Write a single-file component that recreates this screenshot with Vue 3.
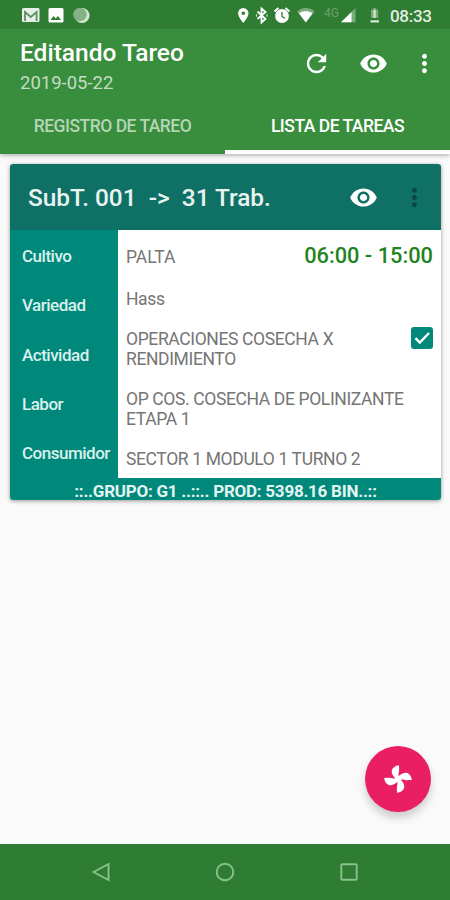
<template>
  <div class="screen">
    <header class="top">
      <div class="status-bar">
        <svg class="status-icons" viewBox="0 0 450 29">
          <!-- notifications -->
          <rect x="22" y="8" width="17.500" height="14" rx="1.500" fill="#e6f0e6" />
          <path d="M25 21v-9l5.800 5 5.800-5v9" fill="none" stroke="#5f8f62" stroke-width="1.800" />
          <rect x="48.500" y="8" width="15" height="14.500" rx="1.500" fill="#fff" />
          <path d="M50.500 20l3-4 2.300 2.500 2-2.500 3.200 4z" fill="#2e7d32" />
          <circle cx="82" cy="15.500" r="7.600" fill="#d5e8d5" />
          <circle cx="80" cy="14.500" r="6.800" fill="#84b287" />
          <!-- system -->
          <path d="M243.300 8a5.200 5.200 0 0 0-5.200 5.200c0 3.900 5.200 9.800 5.200 9.800s5.200-5.900 5.200-9.800A5.200 5.200 0 0 0 243.300 8zm0 7a1.800 1.800 0 1 1 0-3.600 1.800 1.800 0 0 1 0 3.600z" fill="#fff" />
          <path d="M257.500 11.500l8 7.500-4 3.500V8.500l4 3.500-8 7" fill="none" stroke="#fff" stroke-width="1.800" />
          <path d="M256.500 14.200v2.600M267 14.200v2.600" stroke="#c9dfca" stroke-width="1.200" />
          <circle cx="282" cy="16" r="6.900" fill="#fff" />
          <path d="M274.500 11.500l4-3.500M289.500 11.500l-4-3.500" stroke="#fff" stroke-width="2" />
          <path d="M282 12v4.500l3 2" fill="none" stroke="#2e7d32" stroke-width="1.300" />
          <path d="M297 11.500c5-4.600 12.600-4.600 17.600 0L305.800 22.500z" fill="#79ab7b" />
          <path d="M299 13.200c4.200-2.600 9.400-2.600 13.600 0l-6.800 9.300z" fill="#fff" />
          <path d="M341 22.300h14.500V8z" fill="#79ab7b" />
          <path d="M341 22.300h10.500V12z" fill="#fff" />
          <path d="M371 9.500h2V8h3.200v1.500h2v8.500h-7.200z" fill="#79ab7b" />
          <path d="M374.600 10v8M370.500 21.300h8.500" stroke="#d5e8d5" stroke-width="2.200" />
        </svg>
        <span class="network">4G</span>
        <span class="clock">08:33</span>
      </div>

      <div class="toolbar">
        <div class="titles">
          <h1>Editando Tareo</h1>
          <p>2019-05-22</p>
        </div>
        <button type="button" class="icon-btn refresh">
          <svg viewBox="0 0 24 24"><path :d="icons.refresh" /></svg>
        </button>
        <button type="button" class="icon-btn eye">
          <svg viewBox="0 0 24 24"><path :d="icons.eye" /></svg>
        </button>
        <button type="button" class="icon-btn more">
          <svg viewBox="0 0 24 24"><path :d="icons.more" /></svg>
        </button>
      </div>

      <nav class="tabs">
        <button
          v-for="(tab, index) in tabs"
          :key="tab"
          type="button"
          :class="['tab', { active: activeTab === index }]"
          @click="activeTab = index"
        >
          <span>{{ tab }}</span>
        </button>
      </nav>
    </header>

    <main class="content">
      <section class="card">
        <div class="card-header">
          <h2>SubT. 001 &nbsp;-&gt; &nbsp;31 Trab.</h2>
          <button type="button" class="icon-btn eye">
            <svg viewBox="0 0 24 24"><path :d="icons.eye" /></svg>
          </button>
          <button type="button" class="icon-btn card-more">
            <svg viewBox="0 0 24 24"><path :d="icons.more" /></svg>
          </button>
        </div>

        <div class="card-body">
          <div class="labels">
            <span v-for="label in labels" :key="label">{{ label }}</span>
          </div>
          <div class="values">
            <div class="row first">
              <span>PALTA</span>
              <strong class="hours">06:00 - 15:00</strong>
            </div>
            <div class="row">Hass</div>
            <div class="row">
              <span>OPERACIONES COSECHA X<br />RENDIMIENTO</span>
              <button type="button" :class="['checkbox', { checked }]" @click="checked = !checked">
                <svg v-if="checked" viewBox="0 0 22 22"><path d="M4.500 11.200l4.300 4.300L18 6" /></svg>
              </button>
            </div>
            <div class="row">OP COS. COSECHA DE POLINIZANTE<br />ETAPA 1</div>
            <div class="row">SECTOR 1 MODULO 1 TURNO 2</div>
          </div>
        </div>

        <div class="card-footer"><span>::..GRUPO: G1 ..::.. PROD: 5398.16 BIN..::</span></div>
      </section>

      <button type="button" class="fab">
        <svg viewBox="-15 -15 30 30">
          <path
            v-for="angle in [0, 90, 180, 270]"
            :key="angle"
            :transform="`rotate(${angle})`"
            d="M-1.500 1C-4-2-6.800-5-6.200-8.500C-5.500-11.500-2.500-13.500 1-13.800C.9-11.500 1.500-9.500 .9-7C.3-4.500 .4-2.500 1.500 0z"
          />
        </svg>
      </button>
    </main>

    <footer class="nav-bar">
      <svg viewBox="0 0 24 24"><path d="M4.500 12L19.500 4v16z" /></svg>
      <svg viewBox="0 0 24 24"><circle cx="12" cy="12" r="8.300" /></svg>
      <svg viewBox="0 0 24 24"><rect x="4.300" y="4.300" width="15.400" height="15.400" rx="1" /></svg>
    </footer>
  </div>
</template>

<script setup>
import { ref } from 'vue'

const tabs = ['REGISTRO DE TAREO', 'LISTA DE TAREAS']
const activeTab = ref(1)
const checked = ref(true)

const labels = ['Cultivo', 'Variedad', 'Actividad', 'Labor', 'Consumidor']

const icons = {
  refresh: 'M17.650 6.350C16.200 4.900 14.210 4 12 4c-4.420 0-7.990 3.580-7.990 8s3.570 8 7.990 8c3.730 0 6.840-2.550 7.730-6h-2.080c-.820 2.330-3.040 4-5.650 4-3.310 0-6-2.690-6-6s2.690-6 6-6c1.660 0 3.140.690 4.220 1.780L13 11h7V4l-2.350 2.350z',
  eye: 'M12 4.500C7 4.500 2.730 7.610 1 12c1.730 4.390 6 7.500 11 7.500s9.270-3.110 11-7.500c-1.730-4.390-6-7.500-11-7.500zM12 17c-2.760 0-5-2.240-5-5s2.240-5 5-5 5 2.240 5 5-2.240 5-5 5zm0-8c-1.660 0-3 1.340-3 3s1.340 3 3 3 3-1.340 3-3-1.340-3-3-3z',
  more: 'M12 8c1.100 0 2-.900 2-2s-.900-2-2-2-2 .900-2 2 .900 2 2 2zm0 2c-1.100 0-2 .900-2 2s.900 2 2 2 2-.900 2-2-.900-2-2-2zm0 6c-1.100 0-2 .900-2 2s.900 2 2 2 2-.900 2-2-.900-2-2-2z'
}
</script>

<style>
body {
  margin: 0;
}
</style>

<style scoped>
.screen {
  width: 450px;
  height: 900px;
  display: flex;
  flex-direction: column;
  overflow: hidden;
  background: #fafafa;
  font-family: Roboto, sans-serif;
  white-space: nowrap;
}

button {
  padding: 0;
  border: none;
  background: none;
  font: inherit;
  cursor: pointer;
}

h1,
h2,
p {
  margin: 0;
}

.top {
  height: 154px;
  flex: none;
  display: flex;
  flex-direction: column;
  background: #388e3c;
  box-shadow: 0 1px 5px rgba(0, 0, 0, 0.35);
}

.status-bar {
  position: relative;
  height: 29px;
  flex: none;
  display: flex;
  justify-content: flex-end;
  align-items: center;
  background: #2e7d32;
  box-sizing: border-box;
  padding: 3px 18px 0 0;
}

.status-icons {
  position: absolute;
  inset: 0;
  width: 450px;
  height: 29px;
}

.network {
  margin: -7px 51px 0 0;
  font-size: 12px;
  color: #6a9f6d;
}

.clock {
  width: 42px;
  font-size: 17px;
  font-weight: 500;
  letter-spacing: -0.3px;
  color: #e3eee3;
}

.toolbar {
  height: 68px;
  flex: none;
  display: flex;
  align-items: center;
  padding-left: 20px;
}

.titles {
  flex: 1;
  padding-top: 8px;
}

.titles h1 {
  font-size: 24.5px;
  line-height: 28px;
  font-weight: 500;
  color: #fff;
}

.titles p {
  margin-top: 3px;
  font-size: 18.5px;
  line-height: 26px;
  color: #c3ddc4;
}

.icon-btn {
  display: flex;
  align-items: center;
  justify-content: center;
}

.icon-btn svg {
  width: 29px;
  height: 29px;
  fill: #fff;
}

.toolbar .refresh {
  width: 59px;
}

.toolbar .eye {
  width: 55px;
}

.toolbar .more {
  width: 49px;
  padding-right: 3px;
}

.tabs {
  flex: 1;
  display: flex;
}

.tab {
  flex: 1;
  display: flex;
  align-items: center;
  justify-content: center;
  padding-top: 4px;
  border-bottom: 4px solid transparent;
  font-size: 17.5px;
  font-weight: 500;
  letter-spacing: -0.5px;
  color: #b5d5b7;
}

.tab.active {
  border-bottom-color: #fff;
  color: #fff;
}

.content {
  position: relative;
  flex: 1;
  padding: 10px 9px 0 10px;
}

.card {
  border-radius: 3px;
  overflow: hidden;
  background: #fff;
  box-shadow: 0 1px 4px rgba(0, 0, 0, 0.4);
}

.card-header {
  height: 66px;
  display: flex;
  align-items: center;
  padding-left: 18px;
  background: #0f7065;
}

.card-header h2 {
  flex: 1;
  font-size: 24.4px;
  font-weight: 500;
  color: #e9f3f2;
}

.card-header .eye {
  width: 49px;
}

.card-more {
  width: 53px;
}

.icon-btn.card-more svg {
  fill: #0a4740;
}

.card-body {
  height: 248px;
  display: flex;
}

.labels {
  width: 96px;
  flex: none;
  padding: 2px 0 0 12px;
  background: #00897b;
  font-size: 17px;
  font-weight: 500;
  letter-spacing: -0.5px;
  color: #d9f0ed;
}

.labels span {
  display: block;
  height: 49.3px;
  line-height: 49.3px;
}

.values {
  flex: 1;
  padding: 17px 8px 0;
  font-size: 17.5px;
  line-height: 20px;
  letter-spacing: -0.37px;
  color: #757575;
}

.row {
  display: flex;
  justify-content: space-between;
  margin-bottom: 20px;
}

.row.first {
  margin-bottom: 22px;
  letter-spacing: 0;
}

.hours {
  margin-top: -1px;
  font-size: 21.8px;
  font-weight: 500;
  color: #218321;
}

.checkbox {
  width: 22px;
  height: 22px;
  margin-top: -2px;
  border-radius: 3px;
  box-sizing: border-box;
  border: 2px solid #00897b;
}

.checkbox.checked {
  background: #00897b;
}

.checkbox svg {
  display: block;
  width: 22px;
  height: 22px;
  margin: -2px;
  fill: none;
  stroke: #fff;
  stroke-width: 2.4;
}

.card-footer {
  height: 22px;
  background: #00897b;
  text-align: center;
  font-size: 17px;
  line-height: 26px;
  font-weight: 700;
  letter-spacing: -0.24px;
  color: #e4f4f2;
}

.fab {
  position: absolute;
  right: 19px;
  bottom: 32px;
  width: 66px;
  height: 66px;
  display: flex;
  align-items: center;
  justify-content: center;
  border-radius: 50%;
  background: #e91e63;
  box-shadow: 0 6px 8px rgba(0, 0, 0, 0.18);
}

.fab svg {
  width: 30px;
  height: 30px;
  fill: #fff;
}

.nav-bar {
  height: 56px;
  flex: none;
  display: flex;
  justify-content: center;
  align-items: center;
  gap: 100px;
  background: #2e7d32;
}

.nav-bar svg {
  width: 24px;
  height: 24px;
  fill: none;
  stroke: #8bbf8d;
  stroke-width: 1.9;
}
</style>
